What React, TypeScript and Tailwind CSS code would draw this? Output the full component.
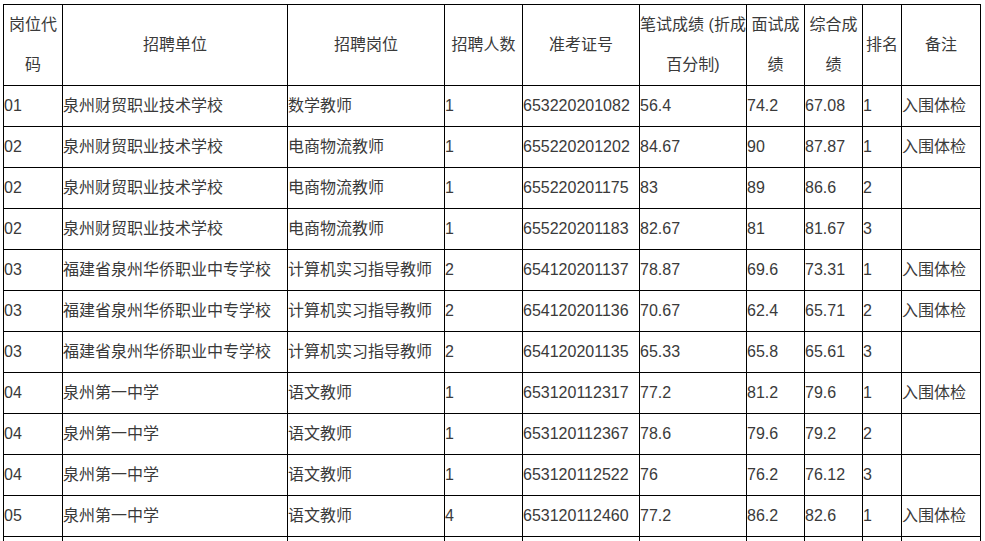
const cols = [59, 225, 157, 78, 117, 107, 58, 58, 39, 79];

type Row = [string, string, string, string, string, string, string, string, string, string];

const rows: Row[] = [
  ["01", "泉州财贸职业技术学校", "数学教师", "1", "653220201082", "56.4", "74.2", "67.08", "1", "入围体检"],
  ["02", "泉州财贸职业技术学校", "电商物流教师", "1", "655220201202", "84.67", "90", "87.87", "1", "入围体检"],
  ["02", "泉州财贸职业技术学校", "电商物流教师", "1", "655220201175", "83", "89", "86.6", "2", ""],
  ["02", "泉州财贸职业技术学校", "电商物流教师", "1", "655220201183", "82.67", "81", "81.67", "3", ""],
  ["03", "福建省泉州华侨职业中专学校", "计算机实习指导教师", "2", "654120201137", "78.87", "69.6", "73.31", "1", "入围体检"],
  ["03", "福建省泉州华侨职业中专学校", "计算机实习指导教师", "2", "654120201136", "70.67", "62.4", "65.71", "2", "入围体检"],
  ["03", "福建省泉州华侨职业中专学校", "计算机实习指导教师", "2", "654120201135", "65.33", "65.8", "65.61", "3", ""],
  ["04", "泉州第一中学", "语文教师", "1", "653120112317", "77.2", "81.2", "79.6", "1", "入围体检"],
  ["04", "泉州第一中学", "语文教师", "1", "653120112367", "78.6", "79.6", "79.2", "2", ""],
  ["04", "泉州第一中学", "语文教师", "1", "653120112522", "76", "76.2", "76.12", "3", ""],
  ["05", "泉州第一中学", "语文教师", "4", "653120112460", "77.2", "86.2", "82.6", "1", "入围体检"],
  ["", "", "", "", "", "", "", "", "", ""],
];

const headers: string[][] = [
  ["岗位代", "码"],
  ["招聘单位"],
  ["招聘岗位"],
  ["招聘人数"],
  ["准考证号"],
  ["笔试成绩 (折成", "百分制)"],
  ["面试成", "绩"],
  ["综合成", "绩"],
  ["排名"],
  ["备注"],
];

export default function App() {
  return (
    <div
      className="h-[541px] overflow-hidden bg-white pl-[3px] pt-[4px] text-[16px] text-[#3a3a3a]"
      style={{ fontFamily: '"Liberation Sans", "Noto Sans CJK SC", sans-serif' }}
    >
      <table className="table-fixed border-collapse w-[978px]">
        <colgroup>
          {cols.map((w, i) => (
            <col key={i} style={{ width: w }} />
          ))}
        </colgroup>
        <thead>
          <tr className="h-[81px]">
            {headers.map((h, i) => (
              <th
                key={i}
                className="border border-black p-0 text-center align-middle font-normal leading-[40px] whitespace-nowrap"
              >
                {h.map((line, j) => (
                  <div key={j}>{line}</div>
                ))}
              </th>
            ))}
          </tr>
        </thead>
        <tbody>
          {rows.map((r, i) => (
            <tr key={i} className="h-[41px]">
              {r.map((c, j) => (
                <td
                  key={j}
                  className="border border-black p-0 text-left align-middle leading-[24px] whitespace-nowrap"
                >
                  {c || "\u00a0"}
                </td>
              ))}
            </tr>
          ))}
        </tbody>
      </table>
    </div>
  );
}
